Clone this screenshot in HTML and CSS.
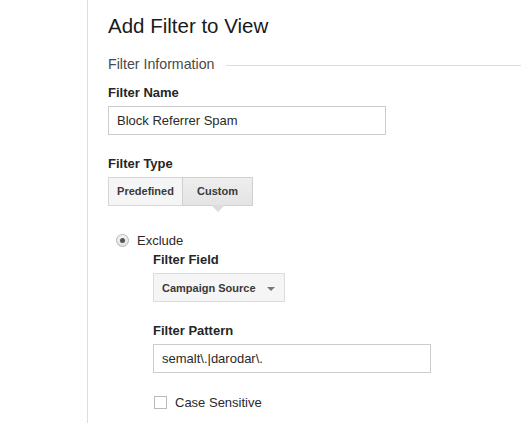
FILE: index.html
```html
<!DOCTYPE html>
<html lang="en">
<head>
<meta charset="utf-8">
<title>Add Filter to View</title>
<link rel="stylesheet" href="styles.css">
</head>
<body>
<div class="page">
  <aside class="rail"></aside>
  <main class="content">
    <h1 class="title">Add Filter to View</h1>
    <div class="section-head">
      <span class="section-title">Filter Information</span>
      <span class="section-line"></span>
    </div>

    <div class="field-label">Filter Name</div>
    <input class="text-input name-input" type="text" value="Block Referrer Spam">

    <div class="field-label type-label">Filter Type</div>
    <div class="seg">
      <span class="seg-btn">Predefined</span>
      <span class="seg-btn seg-active">Custom</span>
    </div>

    <div class="radio-row">
      <span class="radio"><span class="radio-dot"></span></span>
      <span class="radio-text">Exclude</span>
    </div>

    <div class="sub">
      <div class="field-label">Filter Field</div>
      <div class="dropdown">
        <span class="dropdown-text">Campaign Source</span>
        <span class="dropdown-caret"></span>
      </div>

      <div class="field-label pattern-label">Filter Pattern</div>
      <input class="text-input pattern-input" type="text" value="semalt\.|darodar\.">

      <div class="check-row">
        <span class="checkbox"></span>
        <span class="check-text">Case Sensitive</span>
      </div>
    </div>
  </main>
</div>
</body>
</html>
```

FILE: styles.css
```css
html, body {
  margin: 0;
  padding: 0;
  background: #ffffff;
}

body {
  font-family: "Liberation Sans", Arial, sans-serif;
  color: #333333;
  width: 521px;
  height: 423px;
  overflow: hidden;
}

.page {
  display: flex;
  height: 423px;
}

.rail {
  width: 87px;
  flex: none;
  border-right: 1px solid #dddddd;
}

.content {
  flex: 1;
  padding: 14px 0 0 20px;
  display: flex;
  flex-direction: column;
  align-items: flex-start;
}

.title {
  margin: 0;
  font-size: 20.5px;
  line-height: 24px;
  font-weight: normal;
  color: #1a1a1a;
}

.section-head {
  margin-top: 18px;
  display: flex;
  align-items: center;
  align-self: stretch;
}

.section-title {
  font-size: 14.2px;
  line-height: 16px;
  color: #4a4a4a;
}

.section-line {
  flex: 1;
  height: 1px;
  margin: 2px 0 0 12px;
  background: #dddddd;
}

.field-label {
  margin-top: 13px;
  font-size: 13px;
  line-height: 15px;
  font-weight: bold;
  color: #262626;
}

.type-label {
  margin-top: 21px;
}

.text-input {
  box-sizing: border-box;
  margin: 6px 0 0 0;
  width: 278px;
  height: 29px;
  padding: 0 8px;
  border: 1px solid #cccccc;
  border-radius: 0;
  background: #ffffff;
  font-family: "Liberation Sans", Arial, sans-serif;
  font-size: 13px;
  color: #2a2a2a;
  outline: none;
}

.seg {
  margin-top: 6px;
  display: flex;
  position: relative;
}

.seg-btn {
  box-sizing: border-box;
  height: 29px;
  line-height: 27px;
  padding: 0 9px;
  border: 1px solid #d6d6d6;
  background: #f5f5f5;
  font-size: 11px;
  font-weight: bold;
  color: #3a3a3a;
  position: relative;
}

.seg-btn:first-child {
  width: 75px;
  text-align: center;
  padding: 0;
}

.seg-active {
  width: 71px;
  margin-left: -1px;
  text-align: center;
  padding: 0;
  background: linear-gradient(#eeeeee, #e4e4e4);
  border-color: #d0d0d0;
}

.seg-active::after {
  content: "";
  position: absolute;
  left: 50%;
  top: 100%;
  margin-left: -7px;
  border-left: 7px solid transparent;
  border-right: 7px solid transparent;
  border-top: 7px solid #dcdcdc;
}

.radio-row {
  margin: 27px 0 0 8px;
  display: flex;
  align-items: center;
  height: 15px;
}

.radio {
  box-sizing: border-box;
  width: 13px;
  height: 13px;
  border: 1px solid #b4b4b4;
  border-radius: 50%;
  background: linear-gradient(#f4f4f4, #e2e2e2);
  display: flex;
  align-items: center;
  justify-content: center;
  margin-top: -1px;
}

.radio-dot {
  width: 5px;
  height: 5px;
  border-radius: 50%;
  background: #555555;
}

.radio-text {
  margin-left: 8px;
  font-size: 13px;
  line-height: 15px;
  color: #2a2a2a;
}

.sub {
  margin-left: 45px;
  display: flex;
  flex-direction: column;
  align-items: flex-start;
}

.sub > .field-label:first-child {
  margin-top: 4px;
}

.dropdown {
  box-sizing: border-box;
  margin-top: 6px;
  width: 132px;
  height: 29px;
  padding: 0 9px 0 8px;
  border: 1px solid #dcdcdc;
  background: #f5f5f5;
  display: flex;
  align-items: center;
  justify-content: space-between;
}

.dropdown-text {
  font-size: 11px;
  font-weight: bold;
  color: #3a3a3a;
}

.dropdown-caret {
  width: 0;
  height: 0;
  border-left: 4px solid transparent;
  border-right: 4px solid transparent;
  border-top: 4px solid #777777;
  margin-top: 2px;
}

.pattern-label {
  margin-top: 21px;
}

.check-row {
  margin: 22px 0 0 1px;
  display: flex;
  align-items: center;
  height: 15px;
}

.checkbox {
  box-sizing: border-box;
  width: 13px;
  height: 13px;
  border: 1px solid #bbbbbb;
  background: #ffffff;
}

.check-text {
  margin-left: 8px;
  font-size: 13px;
  line-height: 15px;
  color: #2a2a2a;
}
```
